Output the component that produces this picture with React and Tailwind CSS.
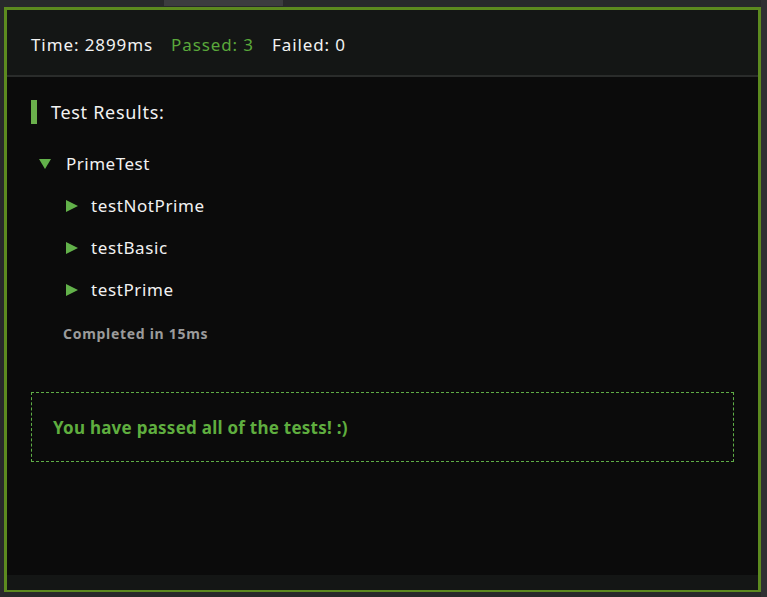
import React from 'react';

const tests = ['testNotPrime', 'testBasic', 'testPrime'];

function TriRight() {
  return (
    <svg width="12" height="12" viewBox="0 0 12 12" className="shrink-0">
      <path d="M0 0 L12 6 L0 12 Z" fill="#62b14a" />
    </svg>
  );
}

function TriDown() {
  return (
    <svg width="12" height="10" viewBox="0 0 12 10" className="shrink-0">
      <path d="M0 0 L12 0 L6 10 Z" fill="#62b14a" />
    </svg>
  );
}

export default function App() {
  return (
    <div
      className="w-[767px] h-[597px] bg-[#28292b] flex overflow-hidden"
      style={{ fontFamily: '"Noto Sans", "Open Sans", sans-serif' }}
    >
      <div className="flex-1 relative pl-[4px] pt-[7px] pb-[5px]">
        {/* tab strip at top */}
        <div className="absolute left-[164px] top-0 w-[119px] h-[6px] bg-[#3c3d3f]" />
        <div className="h-full border-[3px] border-b-2 border-[#5c8a1f] flex flex-col bg-[#0b0b0b]">
          <div className="h-[67px] shrink-0 bg-[#141615] border-b-2 border-[#2a2c2b] flex items-center pl-[24px] pt-[5px] gap-[18px] text-[17px] tracking-[0.9px] text-[#f2f2f2]">
            <span>Time: 2899ms</span>
            <span className="text-[#5aa83b]">Passed: 3</span>
            <span>Failed: 0</span>
          </div>

          <div className="flex-1 px-[24px] pt-[23px]">
            <div className="flex items-center gap-[14px] h-[24px]">
              <div className="w-[6px] h-[24px] bg-[#6ab04c]" />
              <span className="text-[18px] tracking-[0.7px] text-[#f2f2f2]">Test Results:</span>
            </div>

            <div className="mt-[29px] pl-[8px]">
              <div className="flex items-center gap-[15px] h-[22px]">
                <TriDown />
                <span className="text-[17px] tracking-[0.5px] text-[#f2f2f2]">PrimeTest</span>
              </div>
              <div className="pl-[27px]">
                {tests.map((t) => (
                  <div key={t} className="flex items-center gap-[13px] h-[22px] mt-[20px]">
                    <TriRight />
                    <span className="text-[17px] tracking-[0.6px] text-[#f2f2f2]">{t}</span>
                  </div>
                ))}
                <div className="mt-[22px] -ml-[3px] text-[14px] font-bold text-[#9b9b9b] tracking-[0.7px]">
                  Completed in 15ms
                </div>
              </div>
            </div>

            <div className="mt-[48px] w-[703px] h-[70px] border border-dashed border-[#5fae46] flex items-center pl-[21px] pt-[2px]">
              <span className="text-[17px] font-bold text-[#5fae3f] tracking-[0.25px]">
                You have passed all of the tests! :)
              </span>
            </div>
          </div>

          <div className="h-[15px] shrink-0 bg-[#141615]" />
        </div>
      </div>
      <div className="w-[8px] bg-[#2f3032]" />
    </div>
  );
}
